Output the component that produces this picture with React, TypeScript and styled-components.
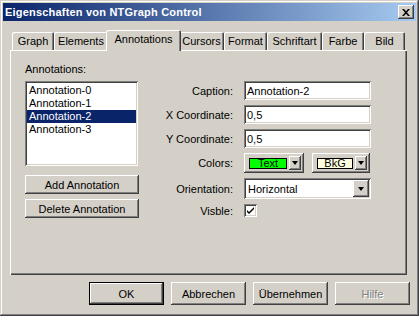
import styled, { createGlobalStyle } from "styled-components";

const GlobalStyle = createGlobalStyle`
  html, body {
    margin: 0;
    padding: 0;
    background: #d4d0c8;
  }
  body {
    font-family: "Liberation Sans", Arial, sans-serif;
    font-size: 11px;
    color: #000;
  }
`;

const raised = `box-shadow: inset -1px -1px #404040, inset 1px 1px #ffffff, inset -2px -2px #808080, inset 2px 2px #d4d0c8;`;
const sunken = `box-shadow: inset 1px 1px #808080, inset -1px -1px #ffffff, inset 2px 2px #404040, inset -2px -2px #d4d0c8;`;

const Window = styled.div`
  width: 419px;
  height: 316px;
  box-sizing: border-box;
  padding: 3px;
  background: #d4d0c8;
  box-shadow: inset -1px -1px #404040, inset 1px 1px #d4d0c8, inset -2px -2px #808080, inset 2px 2px #ffffff;
  display: flex;
  flex-direction: column;
`;

const TitleBar = styled.div`
  height: 18px;
  display: flex;
  align-items: center;
  justify-content: space-between;
  padding: 0 2px 0 2px;
  background: linear-gradient(to right, #0a246a, #a6caf0);
`;

const Title = styled.span`
  color: #fff;
  font-weight: bold;
  font-size: 11px;
  letter-spacing: 0.2px;
  white-space: nowrap;
`;

const CloseBtn = styled.div`
  width: 16px;
  height: 14px;
  background: #d4d0c8;
  ${raised}
  display: flex;
  align-items: center;
  justify-content: center;
`;

const Body = styled.div`
  padding: 7px 9px 0 7px;
  display: flex;
  flex-direction: column;
`;

const TabRow = styled.div`
  display: flex;
  align-items: flex-end;
  height: 22px;
  padding-left: 2px;
  position: relative;
  z-index: 1;
`;

const Tab = styled.div<{ $w: number; $active?: boolean }>`
  box-sizing: border-box;
  width: ${(p) => (p.$active ? p.$w + 4 : p.$w)}px;
  height: ${(p) => (p.$active ? 21 : 18)}px;
  margin: ${(p) => (p.$active ? "0 -2px -1px -2px" : "0")};
  background: #d4d0c8;
  border-radius: 2px 2px 0 0;
  box-shadow: inset 1px 1px #ffffff, inset -1px 0 #404040, inset -2px 0 #808080;
  display: flex;
  justify-content: center;
  padding-top: 3px;
  white-space: nowrap;
  position: relative;
  z-index: ${(p) => (p.$active ? 2 : 1)};
`;

const Panel = styled.div`
  height: 225px;
  box-sizing: border-box;
  box-shadow: inset 1px 1px #ffffff, inset -1px -1px #404040, inset -2px -2px #808080;
  padding: 13px 0 0 15px;
  display: flex;
`;

const LeftCol = styled.div`
  width: 114px;
  display: flex;
  flex-direction: column;
`;

const Label = styled.div`
  line-height: 13px;
  height: 13px;
`;

const ListBox = styled.div`
  margin-top: 5px;
  width: 113px;
  height: 85px;
  box-sizing: border-box;
  background: #fff;
  ${sunken}
  padding: 3px 2px;
`;

const ListItem = styled.div<{ $sel?: boolean }>`
  height: 13px;
  line-height: 13px;
  padding-left: 2px;
  background: ${(p) => (p.$sel ? "#0a246a" : "transparent")};
  color: ${(p) => (p.$sel ? "#fff" : "#000")};
`;

const Button = styled.div<{ $w?: number; $h?: number; $default?: boolean; $disabled?: boolean }>`
  box-sizing: border-box;
  width: ${(p) => p.$w ?? 114}px;
  height: ${(p) => p.$h ?? 19}px;
  background: #d4d0c8;
  display: flex;
  align-items: center;
  justify-content: center;
  white-space: nowrap;
  color: ${(p) => (p.$disabled ? "#808080" : "#000")};
  text-shadow: ${(p) => (p.$disabled ? "1px 1px #ffffff" : "none")};
  ${(p) =>
    p.$default
      ? "box-shadow: inset 1px 1px #000, inset -1px -1px #000, inset -2px -2px #404040, inset 2px 2px #ffffff, inset -3px -3px #808080;"
      : raised}
`;

const LeftButtons = styled.div`
  margin-top: 9px;
  display: flex;
  flex-direction: column;
  gap: 5px;
`;

const Form = styled.div`
  margin: 18px 0 0 4px;
  display: grid;
  grid-template-columns: 90px 127px;
  grid-template-rows: 19px 19px 19px 20px 21px 13px;
  column-gap: 11px;
  row-gap: 5px;
  align-items: center;
`;

const FormLabel = styled.div`
  text-align: right;
`;

const TextInput = styled.div`
  height: 19px;
  box-sizing: border-box;
  background: #fff;
  ${sunken}
  padding: 0 3px;
  display: flex;
  align-items: center;
  white-space: nowrap;
`;

const ColorRow = styled.div`
  display: flex;
  gap: 8px;
`;

const ColorButton = styled.div<{ $w: number }>`
  box-sizing: border-box;
  width: ${(p) => p.$w}px;
  height: 20px;
  background: #d4d0c8;
  ${raised}
  display: flex;
  align-items: center;
  padding: 0 3px 0 5px;
  gap: 2px;
`;

const Swatch = styled.div<{ $color: string }>`
  width: 38px;
  height: 11px;
  box-sizing: border-box;
  border: 1px solid #000;
  background: ${(p) => p.$color};
  display: flex;
  align-items: center;
  justify-content: center;
  font-size: 11px;
  line-height: 9px;
`;

const ArrowBtn = styled.div<{ $w?: number; $h?: number }>`
  width: ${(p) => p.$w ?? 12}px;
  height: ${(p) => p.$h ?? 14}px;
  background: #d4d0c8;
  ${raised}
  display: flex;
  align-items: center;
  justify-content: center;
  flex-shrink: 0;
`;

const Triangle = styled.div`
  width: 0;
  height: 0;
  border-left: 3.5px solid transparent;
  border-right: 3.5px solid transparent;
  border-top: 4px solid #000;
`;

const Combo = styled.div`
  height: 21px;
  box-sizing: border-box;
  background: #fff;
  ${sunken}
  padding: 2px 2px 2px 4px;
  display: flex;
  align-items: center;
  justify-content: space-between;
`;

const CheckBox = styled.div`
  width: 13px;
  height: 13px;
  box-sizing: border-box;
  background: #fff;
  ${sunken}
  display: flex;
  align-items: center;
  justify-content: center;
`;

const Footer = styled.div`
  display: flex;
  justify-content: flex-end;
  gap: 7px;
  margin: 7px -3px 0 0;
`;

const tabs: [string, number][] = [
  ["Graph", 42],
  ["Elements", 54],
  ["Annotations", 71],
  ["Cursors", 45],
  ["Format", 43],
  ["Schriftart", 55],
  ["Farbe", 42],
  ["Bild", 41],
];

const items = ["Annotation-0", "Annotation-1", "Annotation-2", "Annotation-3"];

export default function App() {
  return (
    <>
      <GlobalStyle />
      <Window>
        <TitleBar>
          <Title>Eigenschaften von NTGraph Control</Title>
          <CloseBtn>
            <svg width="8" height="7" viewBox="0 0 8 7">
              <path d="M0 0h2l2 2.2L6 0h2L5 3.5 8 7H6L4 4.8 2 7H0l3-3.5z" fill="#000" />
            </svg>
          </CloseBtn>
        </TitleBar>
        <Body>
          <TabRow>
            {tabs.map(([name, w]) => (
              <Tab key={name} $w={w} $active={name === "Annotations"}>
                {name}
              </Tab>
            ))}
          </TabRow>
          <Panel>
            <LeftCol>
              <Label>Annotations:</Label>
              <ListBox>
                {items.map((it) => (
                  <ListItem key={it} $sel={it === "Annotation-2"}>
                    {it}
                  </ListItem>
                ))}
              </ListBox>
              <LeftButtons>
                <Button>Add Annotation</Button>
                <Button>Delete Annotation</Button>
              </LeftButtons>
            </LeftCol>
            <Form>
              <FormLabel>Caption:</FormLabel>
              <TextInput>Annotation-2</TextInput>
              <FormLabel>X Coordinate:</FormLabel>
              <TextInput>0,5</TextInput>
              <FormLabel>Y Coordinate:</FormLabel>
              <TextInput>0,5</TextInput>
              <FormLabel>Colors:</FormLabel>
              <ColorRow>
                <ColorButton $w={60}>
                  <Swatch $color="#00ff00">Text</Swatch>
                  <ArrowBtn>
                    <Triangle />
                  </ArrowBtn>
                </ColorButton>
                <ColorButton $w={58}>
                  <Swatch $color="#ffffe0">BkG</Swatch>
                  <ArrowBtn>
                    <Triangle />
                  </ArrowBtn>
                </ColorButton>
              </ColorRow>
              <FormLabel>Orientation:</FormLabel>
              <Combo>
                <span>Horizontal</span>
                <ArrowBtn $w={16} $h={17}>
                  <Triangle />
                </ArrowBtn>
              </Combo>
              <FormLabel>Visble:</FormLabel>
              <CheckBox>
                <svg width="9" height="9" viewBox="0 0 9 9">
                  <path d="M1 4l2 2 5-5v2L3 8 1 6z" fill="#000" />
                </svg>
              </CheckBox>
            </Form>
          </Panel>
          <Footer>
            <Button $w={75} $h={23} $default>
              OK
            </Button>
            <Button $w={75} $h={23}>
              Abbrechen
            </Button>
            <Button $w={75} $h={23}>
              Übernehmen
            </Button>
            <Button $w={75} $h={23} $disabled>
              Hilfe
            </Button>
          </Footer>
        </Body>
      </Window>
    </>
  );
}
